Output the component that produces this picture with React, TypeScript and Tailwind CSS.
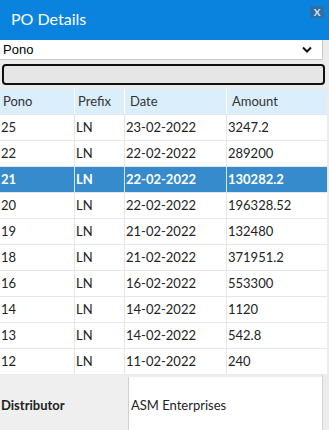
import React from "react";

const rows = [
  ["25", "LN", "23-02-2022", "3247.2"],
  ["22", "LN", "22-02-2022", "289200"],
  ["21", "LN", "22-02-2022", "130282.2"],
  ["20", "LN", "22-02-2022", "196328.52"],
  ["19", "LN", "21-02-2022", "132480"],
  ["18", "LN", "21-02-2022", "371951.2"],
  ["16", "LN", "16-02-2022", "553300"],
  ["14", "LN", "14-02-2022", "1120"],
  ["13", "LN", "14-02-2022", "542.8"],
  ["12", "LN", "11-02-2022", "240"],
];

export default function App() {
  return (
    <div
      className="w-[329px] h-[430px] overflow-hidden bg-[#ececec] text-[#222]"
      style={{ fontFamily: "Lato, 'Noto Sans', sans-serif" }}
    >
      <div className="relative h-[40px] bg-[#0a83df] text-white">
        <div className="pl-[11px] pt-[9px] text-[16px] leading-[20px]">PO Details</div>
        <div className="absolute right-[5px] top-[6px] flex h-[12px] w-[14px] items-center justify-center bg-[#2f6fa6] text-[10px] font-bold leading-none text-[#dfe8f2]">
          X
        </div>
      </div>
      <div
        className="flex h-[20px] w-[323px] items-center justify-between border-b border-r border-[#c9c9c9] bg-white pl-[3px] pr-[10px] text-[13px] text-black"
        style={{ fontFamily: "'Liberation Sans', Arial, sans-serif" }}
      >
        <span>Pono</span>
        <svg width="10" height="7" viewBox="0 0 10 7">
          <path d="M1 1.5 L5 5.5 L9 1.5" fill="none" stroke="#111" strokeWidth="2" />
        </svg>
      </div>
      <div className="mx-[2px] mt-[4px] h-[21px] w-[323px] rounded-[4px] border-2 border-[#111] bg-[#e6e6e6]" />
      <div className="mt-[4px] w-[327px] bg-white text-[13px]">
        <div className="flex h-[25px] items-center bg-[#dbeefb] text-[#333]">
          <div className="flex h-full w-[75px] items-center border-r border-white pl-[3px]">Pono</div>
          <div className="flex h-full w-[50px] items-center border-r border-white pl-[3px]">Prefix</div>
          <div className="flex h-full w-[102px] items-center border-r border-white pl-[5px]">Date</div>
          <div className="flex h-full flex-1 items-center pl-[5px]">Amount</div>
        </div>
        {rows.map((r) => {
          const sel = r[0] === "21";
          return (
            <div
              key={r[0]}
              className={
                sel
                  ? "flex h-[26px] items-center border-t border-[#e6e6e6] bg-[#358bcb] font-bold text-white"
                  : "flex h-[26px] items-center border-t border-[#e6e6e6] text-[#222]"
              }
            >
              <div className={sel ? "flex h-full w-[75px] items-center border-r border-[#e0e0e0] pl-[1px]" : "flex h-full w-[75px] items-center border-r border-[#e6e6e6] pl-[1px]"}>{r[0]}</div>
              <div className={sel ? "flex h-full w-[50px] items-center border-r border-[#e0e0e0] pl-[1px]" : "flex h-full w-[50px] items-center border-r border-[#e6e6e6] pl-[1px]"}>{r[1]}</div>
              <div className={sel ? "flex h-full w-[102px] items-center border-r border-[#e0e0e0] pl-[1px]" : "flex h-full w-[102px] items-center border-r border-[#e6e6e6] pl-[1px]"}>{r[2]}</div>
              <div className="flex h-full flex-1 items-center pl-[1px]">{r[3]}</div>
            </div>
          );
        })}
      </div>
      <div className="mt-[1px] flex h-[60px] w-[323px] border-r border-[#d4d4d4] text-[13px]">
        <div className="flex w-[128px] items-center bg-[#efefef] pl-[1px] pt-[2px] font-bold text-[#222]">
          Distributor
        </div>
        <div className="mt-[2px] flex flex-1 items-center border-l border-[#d0d0d0] bg-white pl-[2px] text-[#222]">
          ASM Enterprises
        </div>
      </div>
    </div>
  );
}
